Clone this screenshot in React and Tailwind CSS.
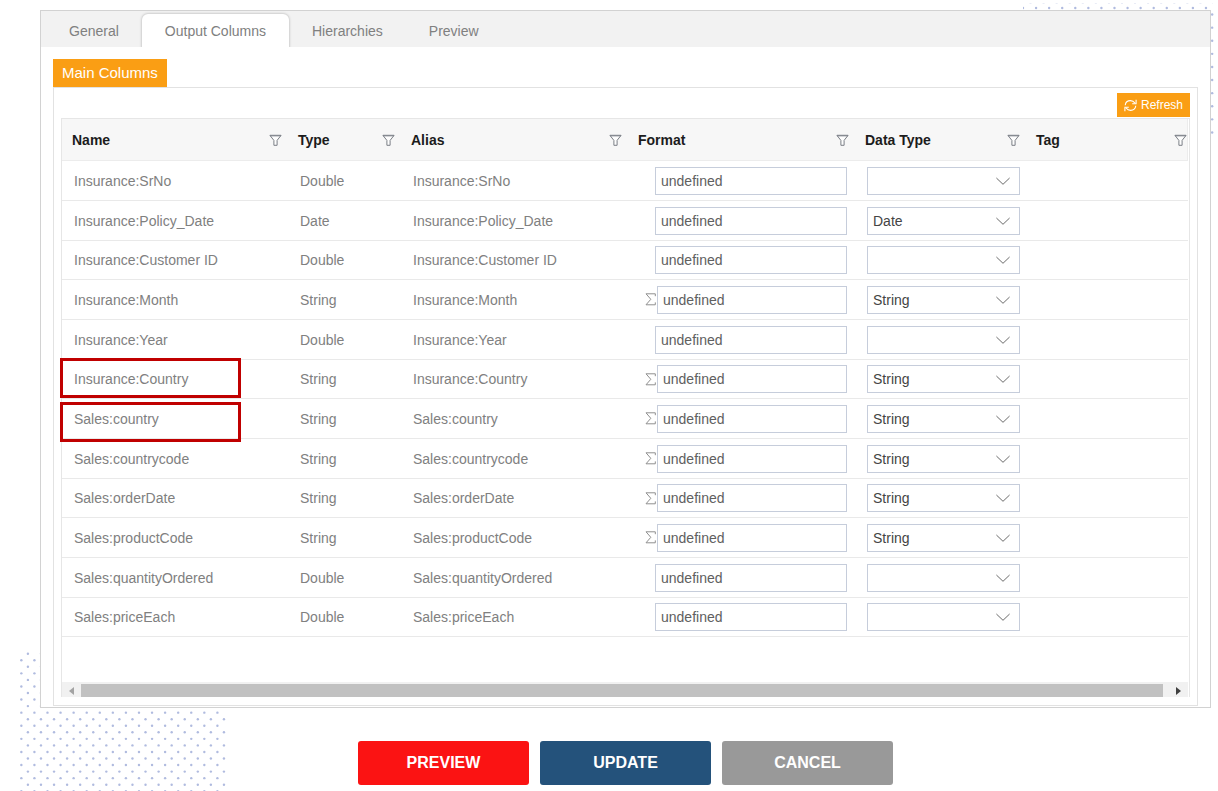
import React from "react";

const columns = [
  { label: "Name", width: "w-[226px]" },
  { label: "Type", width: "w-[113px]" },
  { label: "Alias", width: "w-[227px]" },
  { label: "Format", width: "w-[227px]" },
  { label: "Data Type", width: "w-[171px]" },
  { label: "Tag", width: "", last: true },
];

const rows = [
  { name: "Insurance:SrNo", type: "Double", dataType: "" },
  { name: "Insurance:Policy_Date", type: "Date", dataType: "Date" },
  { name: "Insurance:Customer ID", type: "Double", dataType: "" },
  { name: "Insurance:Month", type: "String", dataType: "String", sigma: true },
  { name: "Insurance:Year", type: "Double", dataType: "" },
  { name: "Insurance:Country", type: "String", dataType: "String", sigma: true, mark: "-top-0.5" },
  { name: "Sales:country", type: "String", dataType: "String", sigma: true, mark: "top-[3px]" },
  { name: "Sales:countrycode", type: "String", dataType: "String", sigma: true },
  { name: "Sales:orderDate", type: "String", dataType: "String", sigma: true },
  { name: "Sales:productCode", type: "String", dataType: "String", sigma: true },
  { name: "Sales:quantityOrdered", type: "Double", dataType: "" },
  { name: "Sales:priceEach", type: "Double", dataType: "" },
];

const tabs = ["General", "Output Columns", "Hierarchies", "Preview"];

const actions = [
  { label: "PREVIEW", color: "bg-[#fb1313]" },
  { label: "UPDATE", color: "bg-[#24527b]" },
  { label: "CANCEL", color: "bg-[#999999]" },
];

function FunnelIcon() {
  return (
    <svg width="13" height="12" viewBox="0 0 13 12" fill="none" stroke="#7b7f86" strokeWidth="1" aria-hidden="true">
      <path d="M0.9 1.3H12.1L8.1 6.4V11.3H4.9V6.4Z" fill="#fdfdfd" />
      <path d="M1 1.9H12" strokeWidth="0.8" />
    </svg>
  );
}

function RefreshIcon() {
  return (
    <svg width="13" height="13" viewBox="0 0 13 13" fill="none" stroke="#fff" strokeWidth="1.1" aria-hidden="true">
      <path d="M1.2 6.2C1.6 3.2 3.8 1.6 6.4 1.6C8.4 1.6 9.8 2.4 10.9 4M12.1 0.8V4.8H8.2" />
      <path d="M11.8 6.8C11.4 9.8 9.2 11.4 6.6 11.4C4.6 11.4 3.2 10.6 2.1 9M0.9 12.2V8.2H4.8" />
    </svg>
  );
}

function SigmaIcon() {
  return (
    <svg className="shrink-0" width="11" height="13" viewBox="0 0 11 13" fill="none" stroke="#8f8f8f" strokeWidth="1" aria-hidden="true">
      <path d="M10.3 3.2V0.8H1L5.8 6.3L1 11.8H10.3V9.4" />
    </svg>
  );
}

function ChevronIcon() {
  return (
    <svg className="pointer-events-none absolute top-2.5 right-2.5" width="14" height="8" viewBox="0 0 14 8" fill="none" stroke="#6b6b6b" strokeWidth="1" aria-hidden="true">
      <path d="M0.4 1L7 7.3L13.6 1" />
    </svg>
  );
}

function DotField({ width, height, cols, lines, x0, y0, shift, className, children }) {
  const dots = [];
  for (let j = 0; j < lines; j++) {
    for (let i = 0; i < cols; i++) {
      dots.push(<circle key={`${i}-${j}`} cx={x0 + i * 13.07 + (j % 2 ? shift : 0)} cy={y0 + j * 6.55} r="1.2" />);
    }
  }
  return (
    <svg className={className} width={width} height={height} fill="#b0bbdf" aria-hidden="true">
      {dots}
      {children}
    </svg>
  );
}

export default function App() {
  return (
    <div className="relative min-h-screen overflow-hidden bg-white font-['Liberation_Sans',Arial,sans-serif] text-sm text-[#808080]">
      <DotField className="absolute bottom-0 left-0" width={228} height={139} cols={16} lines={22} x0={27.9} y0={1.7} shift={-6.55} />
      <DotField className="absolute top-0 right-0" width={195} height={134} cols={15} lines={20} x0={0} y0={8} shift={6.2}>
        <path d="M6.5 3.5H190" stroke="#e9ecf6" strokeWidth="1" strokeDasharray="2 11.07" />
      </DotField>

      <main className="relative mt-2.5 mr-[7px] ml-10">
        <section className="border border-[#d2d2d2] bg-white">
          <div role="tablist" className="flex h-9 items-end bg-[#f2f2f2] pl-[5px]">
            {tabs.map((t) => (
              <button
                key={t}
                role="tab"
                aria-selected={t === "Output Columns"}
                className={
                  t === "Output Columns"
                    ? "h-[33px] rounded-t-md bg-white px-[23px] shadow-[0_0_2px_1px_#cfcfcf] [clip-path:inset(-3px_-3px_0_-3px)]"
                    : "h-[33px] px-[23px]"
                }
              >
                {t}
              </button>
            ))}
          </div>

          <div className="px-3 pt-3 pb-px">
            <h2 className="flex h-7 w-fit items-center bg-[#fa9e14] px-[9px] text-[15px] text-white">Main Columns</h2>
            <div className="border border-[#e2e2e2] px-[7px] pt-[5px] pb-2">
              <div className="flex justify-end">
                <button className="flex h-6 items-center gap-1 bg-[#fa9e14] px-[7px] text-xs text-white">
                  <RefreshIcon />
                  Refresh
                </button>
              </div>

              <div className="mt-px border border-b-0 border-[#e6e6e6] pr-px">
                <table className="w-full table-fixed border-separate border-spacing-0 text-left">
                  <thead>
                    <tr className="h-[42px] bg-[#f7f7f7] text-sm text-[#1c1c1c]">
                      {columns.map((c) => (
                        <th key={c.label} className={`border-b border-[#ececec] p-0 pl-2.5 font-bold ${c.last ? "border-r" : "pr-1.5"} ${c.width}`}>
                          <div className="flex items-center justify-between">
                            {c.label}
                            <button aria-label={`Filter ${c.label}`}>
                              <FunnelIcon />
                            </button>
                          </div>
                        </th>
                      ))}
                    </tr>
                  </thead>
                  <tbody>
                    {rows.map((r) => (
                      <tr key={r.name} className="h-10 [&:nth-child(3n)]:h-[39px] [&>td]:border-b [&>td]:border-[#e9e9e9] [&>td]:p-0">
                        <td className="relative">
                          <span className="pl-3">{r.name}</span>
                          {r.mark && <span className={`pointer-events-none absolute -left-0.5 h-10 w-[181px] border-3 border-[#c00000] ${r.mark}`} />}
                        </td>
                        <td>
                          <span className="pl-3">{r.type}</span>
                        </td>
                        <td>
                          <span className="pl-3">{r.name}</span>
                        </td>
                        <td>
                          <div className="flex items-center justify-end gap-px pr-2">
                            {r.sigma && <SigmaIcon />}
                            <input
                              aria-label={`Format of ${r.name}`}
                              defaultValue="undefined"
                              className={`h-7 border border-[#c6cddb] bg-white px-[5px] text-sm text-[#606060] ${r.sigma ? "w-[190px]" : "w-48"}`}
                            />
                          </div>
                        </td>
                        <td>
                          <div className="relative ml-3 w-[153px]">
                            <select
                              aria-label={`Data type of ${r.name}`}
                              defaultValue={r.dataType}
                              className="block h-7 w-full appearance-none border border-[#c6cddb] bg-white px-[5px] text-sm text-[#444]"
                            >
                              <option value=""></option>
                              <option>Date</option>
                              <option>String</option>
                              <option>Double</option>
                            </select>
                            <ChevronIcon />
                          </div>
                        </td>
                        <td></td>
                      </tr>
                    ))}
                  </tbody>
                </table>

                <div className="mt-[45px] flex h-[15px] items-stretch bg-[#f1f1f1] pt-0.5">
                  <button aria-label="Scroll left" className="flex w-[19px] items-center justify-center">
                    <svg width="5" height="8" viewBox="0 0 5 8" fill="#a3a3a3" aria-hidden="true">
                      <path d="M5 0V8L0 4Z" />
                    </svg>
                  </button>
                  <div className="flex-1 bg-[#c1c1c1]" />
                  <button aria-label="Scroll right" className="flex w-[25px] items-center justify-center pl-1.5">
                    <svg width="5" height="8" viewBox="0 0 5 8" fill="#404040" aria-hidden="true">
                      <path d="M0 0V8L5 4Z" />
                    </svg>
                  </button>
                </div>
              </div>
            </div>
          </div>
        </section>

        <div className="flex justify-center gap-[11px] pt-[33px]">
          {actions.map((a) => (
            <button key={a.label} className={`h-11 w-[171px] rounded-[3px] text-base font-bold text-white ${a.color}`}>
              {a.label}
            </button>
          ))}
        </div>
      </main>
    </div>
  );
}
